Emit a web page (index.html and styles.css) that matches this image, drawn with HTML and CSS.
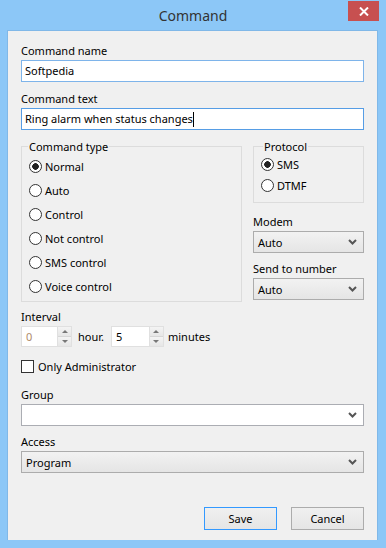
FILE: index.html
```html
<!DOCTYPE html>
<html>
<head>
    <meta charset="UTF-8">
    <title>Command</title>
    <link rel="stylesheet" href="styles.css">
</head>
<body>
<div class="window">
    <div class="titlebar">
        <span class="title">Command</span>
        <span class="close">
            <svg width="10" height="9" viewBox="0 0 10 9"><path d="M1 0.5 L9 8.5 M9 0.5 L1 8.5" stroke="#fff" stroke-width="2"/></svg>
        </span>
    </div>

    <div class="client">
        <div class="field">
            <label>Command name</label>
            <div class="textbox hover">Softpedia</div>
        </div>
        <div class="field gap9">
            <label>Command text</label>
            <div class="textbox focus">Ring alarm when status changes<span class="caret"></span></div>
        </div>

        <div class="middle">
            <fieldset class="group type">
                <legend>Command type</legend>
                <div class="radio"><span class="dot checked"></span>Normal</div>
                <div class="radio"><span class="dot"></span>Auto</div>
                <div class="radio"><span class="dot"></span>Control</div>
                <div class="radio"><span class="dot"></span>Not control</div>
                <div class="radio"><span class="dot"></span>SMS control</div>
                <div class="radio"><span class="dot"></span>Voice control</div>
            </fieldset>

            <div class="side">
                <fieldset class="group protocol">
                    <legend>Protocol</legend>
                    <div class="radio short"><span class="dot checked"></span>SMS</div>
                    <div class="radio short"><span class="dot"></span>DTMF</div>
                </fieldset>
                <div class="field modem">
                    <label>Modem</label>
                    <div class="combo">Auto<svg width="9" height="6" viewBox="0 0 9 6"><path d="M1 1 L4.5 4.5 L8 1" stroke="#555" stroke-width="2" fill="none"/></svg></div>
                </div>
                <div class="field gap8">
                    <label>Send to number</label>
                    <div class="combo">Auto<svg width="9" height="6" viewBox="0 0 9 6"><path d="M1 1 L4.5 4.5 L8 1" stroke="#555" stroke-width="2" fill="none"/></svg></div>
                </div>
            </div>
        </div>

        <div class="field interval">
            <label>Interval</label>
            <div class="interval-row">
                <div class="spinbox">
                    <div class="spin-input dim">0</div>
                    <div class="spin-btns"><span class="up"></span><span class="down"></span></div>
                </div>
                <span class="unit">hour.</span>
                <div class="spinbox second">
                    <div class="spin-input">5</div>
                    <div class="spin-btns"><span class="up"></span><span class="down"></span></div>
                </div>
                <span class="unit minutes">minutes</span>
            </div>
        </div>

        <div class="check-row"><span class="box"></span>Only Administrator</div>

        <div class="field group-field">
            <label>Group</label>
            <div class="combo editable"><span></span><svg width="9" height="6" viewBox="0 0 9 6"><path d="M1 1 L4.5 4.5 L8 1" stroke="#555" stroke-width="2" fill="none"/></svg></div>
        </div>
        <div class="field gap8">
            <label>Access</label>
            <div class="combo">Program<svg width="9" height="6" viewBox="0 0 9 6"><path d="M1 1 L4.5 4.5 L8 1" stroke="#555" stroke-width="2" fill="none"/></svg></div>
        </div>

        <div class="buttons">
            <button type="button" class="btn default">Save</button>
            <button type="button" class="btn">Cancel</button>
        </div>
    </div>
</div>
</body>
</html>
```

FILE: styles.css
```css
body {
    margin: 0;
    background-color: #8cc7f7;
    font-family: "Noto Sans", "Open Sans", sans-serif;
    font-size: 11px;
    color: #000;
}

.window {
    height: 548px;
    display: flex;
    flex-direction: column;
}

.titlebar {
    height: 30px;
    display: grid;
    grid-template-columns: 1fr auto 1fr;
    align-items: start;
}

.title {
    grid-column: 2;
    font-size: 14px;
    line-height: 31px;
    color: #333;
}

.close {
    grid-column: 3;
    justify-self: end;
    width: 31px;
    height: 20px;
    margin: 1px 7px 0 0;
    background-color: #c75050;
    display: flex;
    align-items: center;
    justify-content: center;
}

.client {
    flex: 1;
    margin: 0 8px 8px 7px;
    padding: 12px 13px 10px 13px;
    background-color: #f0f0f0;
    border: 1px solid #80b8e8;
    border-bottom: none;
    display: flex;
    flex-direction: column;
}

.field label {
    display: block;
    line-height: 16px;
    margin-bottom: 1px;
}

.gap9 {
    margin-top: 9px;
}

.gap8 {
    margin-top: 8px;
}

.textbox {
    box-sizing: border-box;
    height: 22px;
    padding-left: 3px;
    background-color: #fff;
    border: 1px solid #7eb4ea;
    line-height: 20px;
    display: flex;
    align-items: center;
}

.textbox.focus {
    border-color: #569de5;
}

.caret {
    width: 1px;
    height: 15px;
    background-color: #000;
}

.middle {
    margin-top: 9px;
    display: flex;
    gap: 11px;
    align-items: flex-start;
}

.group {
    margin: 0;
    padding: 0 0 3px 7px;
    border: 1px solid #dcdcdc;
    min-width: 0;
}

.group legend {
    padding: 0 1px;
    margin-left: -1px;
    line-height: 15px;
}

.type {
    width: 221px;
    box-sizing: border-box;
}

.side {
    flex: 1;
}

.protocol {
    padding-bottom: 6px;
}

.protocol legend {
    margin-left: 2px;
}

.radio {
    height: 24px;
    display: flex;
    align-items: center;
    gap: 3px;
}

.radio.short {
    height: 21px;
}

.dot {
    box-sizing: border-box;
    width: 13px;
    height: 13px;
    border: 1px solid #333;
    border-radius: 50%;
    background-color: #fff;
}

.dot.checked {
    background: radial-gradient(circle, #222 0, #222 3px, #fff 3.6px);
}

.modem {
    margin-top: 11px;
}

.combo {
    box-sizing: border-box;
    height: 22px;
    padding: 0 6px 0 4px;
    border: 1px solid #acacac;
    background: linear-gradient(#f2f2f2, #e5e5e5);
    display: flex;
    align-items: center;
    justify-content: space-between;
}

.combo.editable {
    background: #fff;
    border-color: #abadb3;
}

.interval {
    margin-top: 7px;
}

.interval-row {
    display: flex;
    align-items: center;
}

.spinbox {
    display: flex;
    height: 21px;
}

.spin-input {
    box-sizing: border-box;
    width: 37px;
    padding-left: 4px;
    border: 1px solid #e0e0e0;
    background-color: #fff;
    line-height: 19px;
}

.spin-input.dim {
    color: #b08a6a;
}

.second .spin-input {
    width: 39px;
}

.spin-btns {
    width: 13px;
    display: flex;
    flex-direction: column;
    border: 1px solid #e0e0e0;
    border-left: none;
}

.spin-btns span {
    flex: 1;
    background: linear-gradient(#f4f4f4, #e6e6e6);
    display: flex;
    align-items: center;
    justify-content: center;
}

.spin-btns .up {
    border-bottom: 1px solid #d6d6d6;
}

.spin-btns .up::after {
    content: "";
    border: 3px solid transparent;
    border-bottom: 3px solid #777;
    border-top: none;
}

.spin-btns .down::after {
    content: "";
    border: 3px solid transparent;
    border-top: 3px solid #777;
    border-bottom: none;
}

.unit {
    margin: 0 7px 0 6px;
}

.unit.minutes {
    margin-left: 4px;
}

.check-row {
    margin-top: 11px;
    height: 16px;
    display: flex;
    align-items: center;
    gap: 4px;
}

.box {
    box-sizing: border-box;
    width: 13px;
    height: 13px;
    border: 1px solid #333;
    background-color: #fff;
}

.group-field {
    margin-top: 13px;
}

.buttons {
    margin-top: auto;
    display: flex;
    justify-content: flex-end;
    gap: 14px;
}

.btn {
    width: 73px;
    height: 23px;
    padding: 0;
    border: 1px solid #acacac;
    background: linear-gradient(#f0f0f0, #e5e5e5);
    font-family: inherit;
    font-size: 11px;
    color: #000;
}

.btn.default {
    border-color: #3399ff;
}
```
